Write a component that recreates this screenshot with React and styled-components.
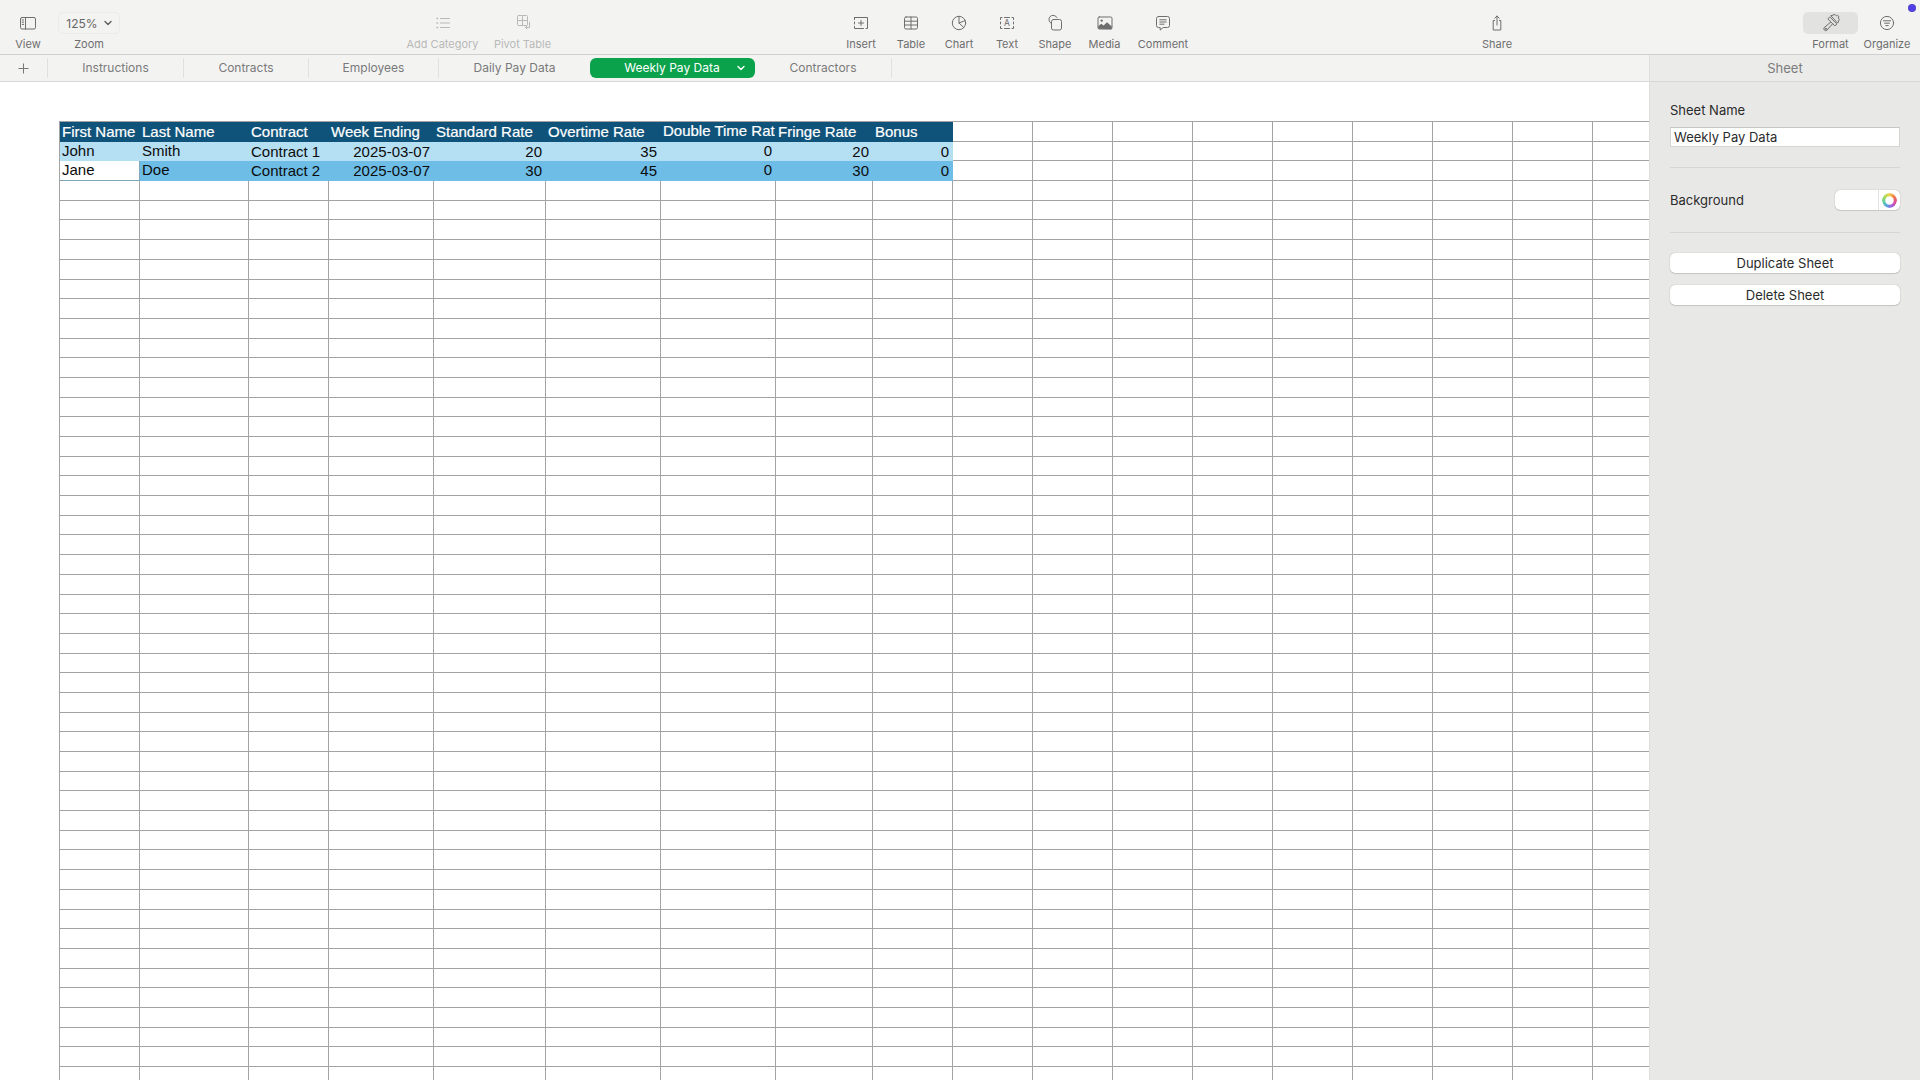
import React from "react";
import styled, { createGlobalStyle } from "styled-components";

const GlobalStyle = createGlobalStyle`
  html, body {
    margin: 0;
    padding: 0;
    height: 100%;
    overflow: hidden;
    background: #ffffff;
  }
  * {
    box-sizing: border-box;
  }
`;

const Page = styled.div`
  position: relative;
  width: 100vw;
  height: 100vh;
  display: flex;
  flex-direction: column;
  overflow: hidden;
  font-family: Inter, "Liberation Sans", sans-serif;
`;

const Toolbar = styled.header`
  flex: none;
  height: 55px;
  display: flex;
  background: #f3f3f2;
  border-bottom: 1px solid #cfcfce;
`;

const ToolItem = styled.div`
  flex: none;
  width: ${({ $width }) => $width}px;
  margin-left: ${({ $offset }) => $offset || 0}px;
  padding-top: 12px;
  display: flex;
  flex-direction: column;
  align-items: center;
  color: ${({ $disabled }) => ($disabled ? "#b9b9b8" : "#6e6e6e")};
`;

const IconSlot = styled.div`
  width: ${({ $wide }) => ($wide ? "100%" : "auto")};
  height: 22px;
  display: flex;
  align-items: center;
  justify-content: center;
  border-radius: 5px;
  background: ${({ $active }) => ($active ? "#e2e2e1" : "transparent")};
`;

const ToolLabel = styled.span`
  margin-top: 3px;
  font-size: 11px;
  line-height: 14px;
  white-space: nowrap;
`;

const ZoomBox = styled.div`
  width: 62px;
  height: 22px;
  display: flex;
  align-items: center;
  justify-content: center;
  gap: 6px;
  border: 1px solid #ebebea;
  border-radius: 5px;
  font-size: 12px;
  color: #666666;
`;

const StatusDot = styled.span`
  position: absolute;
  top: 4px;
  right: 4px;
  width: 8px;
  height: 8px;
  border-radius: 50%;
  background: #4f3fe0;
`;

const Body = styled.div`
  flex: 1;
  min-height: 0;
  display: flex;
`;

const Main = styled.main`
  flex: 1;
  min-width: 0;
  display: flex;
  flex-direction: column;
`;

const TabBar = styled.nav`
  flex: none;
  height: 27px;
  display: flex;
  align-items: center;
  background: #f3f3f2;
  border-bottom: 1px solid #d8d8d7;
`;

const AddTab = styled.div`
  width: 47px;
  display: flex;
  justify-content: center;
  color: #777777;
`;

const Tab = styled.div`
  flex: none;
  width: ${({ $width }) => $width}px;
  height: 20px;
  padding-bottom: 1px;
  display: flex;
  align-items: center;
  justify-content: center;
  font-size: 12px;
  color: #7a7a7a;
  border-left: ${({ $after }) => ($after ? "none" : "1px solid #e1e1e0")};
  border-right: ${({ $after }) => ($after ? "1px solid #e1e1e0" : "none")};
`;

const ActiveTab = styled.div`
  position: relative;
  flex: none;
  width: 165px;
  height: 20px;
  display: flex;
  align-items: center;
  justify-content: center;
  padding: 0 1px 1px 0;
  font-size: 12px;
  color: #ffffff;
  border-radius: 6px;
  background: #0ba24c;
  svg {
    position: absolute;
    right: 10px;
    top: 7px;
  }
`;

const Canvas = styled.div`
  flex: 1;
  min-height: 0;
  overflow: hidden;
  padding: 39px 0 0 59px;
  background: #ffffff;
`;

const Sheet = styled.div`
  display: grid;
  grid-template-columns: 80px 109px 80px 105px 112px 115px 115px 97px repeat(10, 80px);
  grid-auto-rows: 19.7px;
  width: max-content;
  border-top: 1px solid #a3a3a3;
  border-left: 1px solid #a3a3a3;
`;

const toneStyles = {
  head: "background:#10537a;color:#ffffff;border-color:#10537a;-webkit-text-stroke:0.2px #ffffff;",
  light: "background:#b5dff3;color:#0c0c0c;border-color:#b5dff3;",
  mid: "background:#6dbde6;color:#0c0c0c;border-color:#6dbde6;",
  edit: "background:#ffffff;color:#0c0c0c;border-color:#7fa6b6;",
  empty: "background:#ffffff;border-color:#a3a3a3;",
};

const Cell = styled.div`
  min-width: 0;
  padding: ${({ $raised }) => ($raised ? "0 2px 2px" : "0 2px")};
  padding-right: ${({ $right }) => ($right ? 3 : 0)}px;
  display: flex;
  align-items: center;
  justify-content: ${({ $right }) => ($right ? "flex-end" : "flex-start")};
  overflow: hidden;
  white-space: nowrap;
  font-family: "Liberation Sans", Arial, sans-serif;
  font-size: 15px;
  line-height: 17px;
  border-right: 1px solid;
  border-bottom: 1px solid;
  ${({ $tone }) => toneStyles[$tone]}
`;

const Panel = styled.aside`
  flex: none;
  width: 271px;
  display: flex;
  flex-direction: column;
  background: #e8e8e7;
  border-left: 1px solid #dedede;
`;

const PanelHeader = styled.div`
  flex: none;
  height: 27px;
  display: flex;
  align-items: center;
  justify-content: center;
  font-size: 13px;
  color: #7c7c7c;
  background: #ebebea;
  border-bottom: 1px solid #d8d8d7;
`;

const PanelBody = styled.div`
  padding: 20px 20px 0 20px;
  display: flex;
  flex-direction: column;
`;

const FieldLabel = styled.span`
  font-size: 13px;
  line-height: 16px;
  color: #2b2b2b;
`;

const NameInput = styled.div`
  height: 20px;
  margin-top: 9px;
  padding-left: 3px;
  display: flex;
  align-items: center;
  font-size: 13px;
  color: #2b2b2b;
  background: #ffffff;
  border: 1px solid #d5d5d4;
  border-top-color: #c6c6c5;
`;

const Divider = styled.div`
  height: 1px;
  margin: ${({ $margin }) => $margin};
  background: #d6d6d5;
`;

const BackgroundRow = styled.div`
  height: 20px;
  display: flex;
  align-items: center;
  justify-content: space-between;
`;

const Swatch = styled.div`
  width: 65px;
  height: 20px;
  display: flex;
  justify-content: flex-end;
  align-items: center;
  background: #ffffff;
  border-radius: 5px;
  box-shadow: 0 0 1px rgba(0, 0, 0, 0.4), 0 1px 1px rgba(0, 0, 0, 0.1);
`;

const WheelWrap = styled.div`
  width: 22px;
  height: 100%;
  display: flex;
  align-items: center;
  justify-content: center;
  border-left: 1px solid #e2e2e2;
`;

const ColorWheel = styled.div`
  width: 15px;
  height: 15px;
  border-radius: 50%;
  background: conic-gradient(#f0d24a, #ee7a4a, #e04f8f, #a65ad8, #5aa0e8, #5fd0a0, #a8dc5a, #f0d24a);
  -webkit-mask: radial-gradient(circle, transparent 3.5px, #000 5px);
  mask: radial-gradient(circle, transparent 3.5px, #000 5px);
`;

const SheetButton = styled.button`
  height: 20px;
  margin: 0 0 12px;
  padding: 0 0 1px;
  font-family: inherit;
  font-size: 13px;
  color: #2b2b2b;
  background: #ffffff;
  border: none;
  border-radius: 5px;
  box-shadow: 0 0 1px rgba(0, 0, 0, 0.35), 0 1px 1px rgba(0, 0, 0, 0.12);
`;

const Icon = ({ w = 18, h = 18, children }) => (
  <svg
    width={w}
    height={h}
    viewBox={`0 0 ${w} ${h}`}
    fill="none"
    stroke="currentColor"
    strokeWidth="1"
    strokeLinecap="round"
    strokeLinejoin="round"
  >
    {children}
  </svg>
);

const ViewIcon = () => (
  <Icon>
    <rect x="1.5" y="3.5" width="15" height="11.5" rx="1.5" />
    <path d="M6.5 3.5V15" />
    <path d="M3.2 6h1.4M3.2 8.2h1.4M3.2 10.4h1.4" />
  </Icon>
);

const CategoryIcon = () => (
  <Icon>
    <path d="M6.5 4.5h9M6.5 9h9M6.5 13.5h9" />
    <path d="M3 4.5h.6M3 9h.6M3 13.5h.6" strokeWidth="1.5" />
  </Icon>
);

const PivotIcon = () => (
  <Icon>
    <rect x="3.5" y="1.5" width="10" height="10" rx="1" />
    <path d="M8.5 1.5v10M3.5 6.5h10" />
    <path d="M15.5 8v5.5h-4M13 12l-1.5 1.5L13 15" />
  </Icon>
);

const InsertIcon = () => (
  <Icon>
    <path d="M2.500 3.500h13v11h-1.500M2.500 3.500v2M2.500 8v2M2.500 12.500v2h9" />
    <path d="M9 6.500v5M6.500 9h5" />
  </Icon>
);

const TableIcon = () => (
  <Icon>
    <rect x="2.500" y="3" width="13" height="12" rx="1.500" />
    <path d="M2.500 7.200h13M2.500 11h13M9 3v12" />
  </Icon>
);

const ChartIcon = () => (
  <Icon>
    <circle cx="9" cy="9" r="6.700" />
    <path d="M9 2.300V9l4.800 4.600M9 9l6.200-2.400" />
  </Icon>
);

const TextIcon = () => (
  <Icon>
    <path d="M4 3.500H2.500v2M2.500 8v2M2.500 12.500v2H4M14 3.500h1.500v2M15.500 8v2M15.500 12.500v2H14M6.500 3.500h5M6.500 14.500h5" />
    <text
      x="9"
      y="12"
      fontSize="8.500"
      textAnchor="middle"
      fill="currentColor"
      stroke="none"
      fontFamily="Inter, sans-serif"
    >
      A
    </text>
  </Icon>
);

const ShapeIcon = () => (
  <Icon>
    <path d="M5.200 9.400A4.300 4.300 0 1 1 11 3.600" />
    <rect x="5.500" y="5.500" width="10" height="10.500" rx="2" />
  </Icon>
);

const MediaIcon = () => (
  <Icon>
    <rect x="2" y="3" width="14" height="12" rx="1.200" />
    <circle cx="5.700" cy="6.600" r="1.200" fill="currentColor" stroke="none" />
    <path
      d="M2.200 14.800v-2.600l3-2.400 2.400 1.800 3.400-3.400 4.800 4.400v2.600z"
      fill="currentColor"
      stroke="none"
    />
  </Icon>
);

const CommentIcon = () => (
  <Icon>
    <path d="M4.500 2.500h9a2 2 0 0 1 2 2v7a2 2 0 0 1-2 2H9.200l-3 2.600v-2.600H4.500a2 2 0 0 1-2-2v-7a2 2 0 0 1 2-2z" />
    <path d="M5.800 5.800h6.400M5.800 8h6.400M5.800 10.200h4.200" />
  </Icon>
);

const ShareIcon = () => (
  <Icon>
    <path d="M6.600 6.500H5.200v9.500h7.600V6.500h-1.400" />
    <path d="M9 11V2M6.800 4.200 9 2l2.200 2.200" />
  </Icon>
);

const FormatIcon = () => (
  <Icon w={20} h={20}>
    <path d="M10.200 2.600 14 1.500l1.400 1.400 1.200-.6 1.400 1.400-.8 1.200 1.100 1.300-1.400 3.600z" />
    <path d="M9 4.200 15.900 11l-2 2-6.800-6.800z" />
    <path d="M9.600 9.200 3.200 14.600a1.900 1.900 0 0 0 2.600 2.700l5.600-6.300" />
    <circle cx="4.800" cy="15.800" r="0.600" />
  </Icon>
);

const OrganizeIcon = () => (
  <Icon>
    <circle cx="9" cy="9" r="6.600" />
    <path d="M5.400 6.800h7.200M6.600 9.200h4.800M7.800 11.600h2.400" />
  </Icon>
);

const Chevron = ({ color = "#5f5f5f" }) => (
  <svg width="8" height="6" viewBox="0 0 8 6" fill="none" stroke={color} strokeWidth="1.400" strokeLinecap="round" strokeLinejoin="round">
    <path d="M1 1.500 4 4.500l3-3" />
  </svg>
);

const PlusIcon = () => (
  <svg width="11" height="11" viewBox="0 0 11 11" stroke="currentColor" strokeWidth="1">
    <path d="M5.500 0.500v10M0.500 5.500h10" />
  </svg>
);

const tools = [
  { label: "View", width: 56, icon: <ViewIcon /> },
  { label: "Zoom", width: 66, zoom: true },
  { label: "Add Category", width: 79, offset: 281, icon: <CategoryIcon />, disabled: true },
  { label: "Pivot Table", width: 81, icon: <PivotIcon />, disabled: true },
  { label: "Insert", width: 50, offset: 273, icon: <InsertIcon /> },
  { label: "Table", width: 50, icon: <TableIcon /> },
  { label: "Chart", width: 46, icon: <ChartIcon /> },
  { label: "Text", width: 50, icon: <TextIcon /> },
  { label: "Shape", width: 46, icon: <ShapeIcon /> },
  { label: "Media", width: 53, icon: <MediaIcon /> },
  { label: "Comment", width: 64, icon: <CommentIcon /> },
  { label: "Share", width: 60, offset: 272, icon: <ShareIcon /> },
  { label: "Format", width: 55, offset: 276, icon: <FormatIcon />, active: true },
  { label: "Organize", width: 58, icon: <OrganizeIcon /> },
];

const tabs = [
  { label: "Instructions", width: 136 },
  { label: "Contracts", width: 125 },
  { label: "Employees", width: 130 },
  { label: "Daily Pay Data", width: 152 },
];

const COLUMN_COUNT = 18;
const ROW_COUNT = 50;

const headers = [
  "First Name",
  "Last Name",
  "Contract",
  "Week Ending",
  "Standard Rate",
  "Overtime Rate",
  "Double Time Rate",
  "Fringe Rate",
  "Bonus",
];

const people = [
  ["John", "Smith", "Contract 1", "2025-03-07", "20", "35", "0", "20", "0"],
  ["Jane", "Doe", "Contract 2", "2025-03-07", "30", "45", "0", "30", "0"],
];

// text in these columns sits right
const rightColumns = [3, 4, 5, 6, 7, 8];

const App = () => {
  const rows = [];
  for (let r = 0; r < ROW_COUNT; r++) {
    for (let c = 0; c < COLUMN_COUNT; c++) {
      const key = `${r}-${c}`;
      if (r === 0 && c < headers.length) {
        rows.push(
          <Cell key={key} $tone="head" $raised={c === 6}>
            {headers[c]}
          </Cell>
        );
      } else if ((r === 1 || r === 2) && c < headers.length) {
        let tone = r === 1 ? "light" : "mid";
        if (r === 2 && c === 0) tone = "edit";
        rows.push(
          <Cell
            key={key}
            $tone={tone}
            $right={rightColumns.includes(c)}
            $raised={c === 0 || c === 1 || c === 6}
          >
            {people[r - 1][c]}
          </Cell>
        );
      } else {
        rows.push(<Cell key={key} $tone="empty" />);
      }
    }
  }

  return (
    <Page>
      <GlobalStyle />
      <Toolbar>
        {tools.map((tool) => (
          <ToolItem
            key={tool.label}
            $width={tool.width}
            $offset={tool.offset}
            $disabled={tool.disabled}
          >
            {tool.zoom ? (
              <ZoomBox>
                125%
                <Chevron />
              </ZoomBox>
            ) : (
              <IconSlot $active={tool.active} $wide={tool.active}>
                {tool.icon}
              </IconSlot>
            )}
            <ToolLabel>{tool.label}</ToolLabel>
          </ToolItem>
        ))}
      </Toolbar>
      <StatusDot />
      <Body>
        <Main>
          <TabBar>
            <AddTab>
              <PlusIcon />
            </AddTab>
            {tabs.map((tab) => (
              <Tab key={tab.label} $width={tab.width}>
                {tab.label}
              </Tab>
            ))}
            <ActiveTab>
              Weekly Pay Data
              <Chevron color="#ffffff" />
            </ActiveTab>
            <Tab $width={137} $after>
              Contractors
            </Tab>
          </TabBar>
          <Canvas>
            <Sheet>{rows}</Sheet>
          </Canvas>
        </Main>
        <Panel>
          <PanelHeader>Sheet</PanelHeader>
          <PanelBody>
            <FieldLabel>Sheet Name</FieldLabel>
            <NameInput>Weekly Pay Data</NameInput>
            <Divider $margin="20px 0 22px" />
            <BackgroundRow>
              <FieldLabel>Background</FieldLabel>
              <Swatch>
                <WheelWrap>
                  <ColorWheel />
                </WheelWrap>
              </Swatch>
            </BackgroundRow>
            <Divider $margin="22px 0 20px" />
            <SheetButton>Duplicate Sheet</SheetButton>
            <SheetButton>Delete Sheet</SheetButton>
          </PanelBody>
        </Panel>
      </Body>
    </Page>
  );
};

export default App;
